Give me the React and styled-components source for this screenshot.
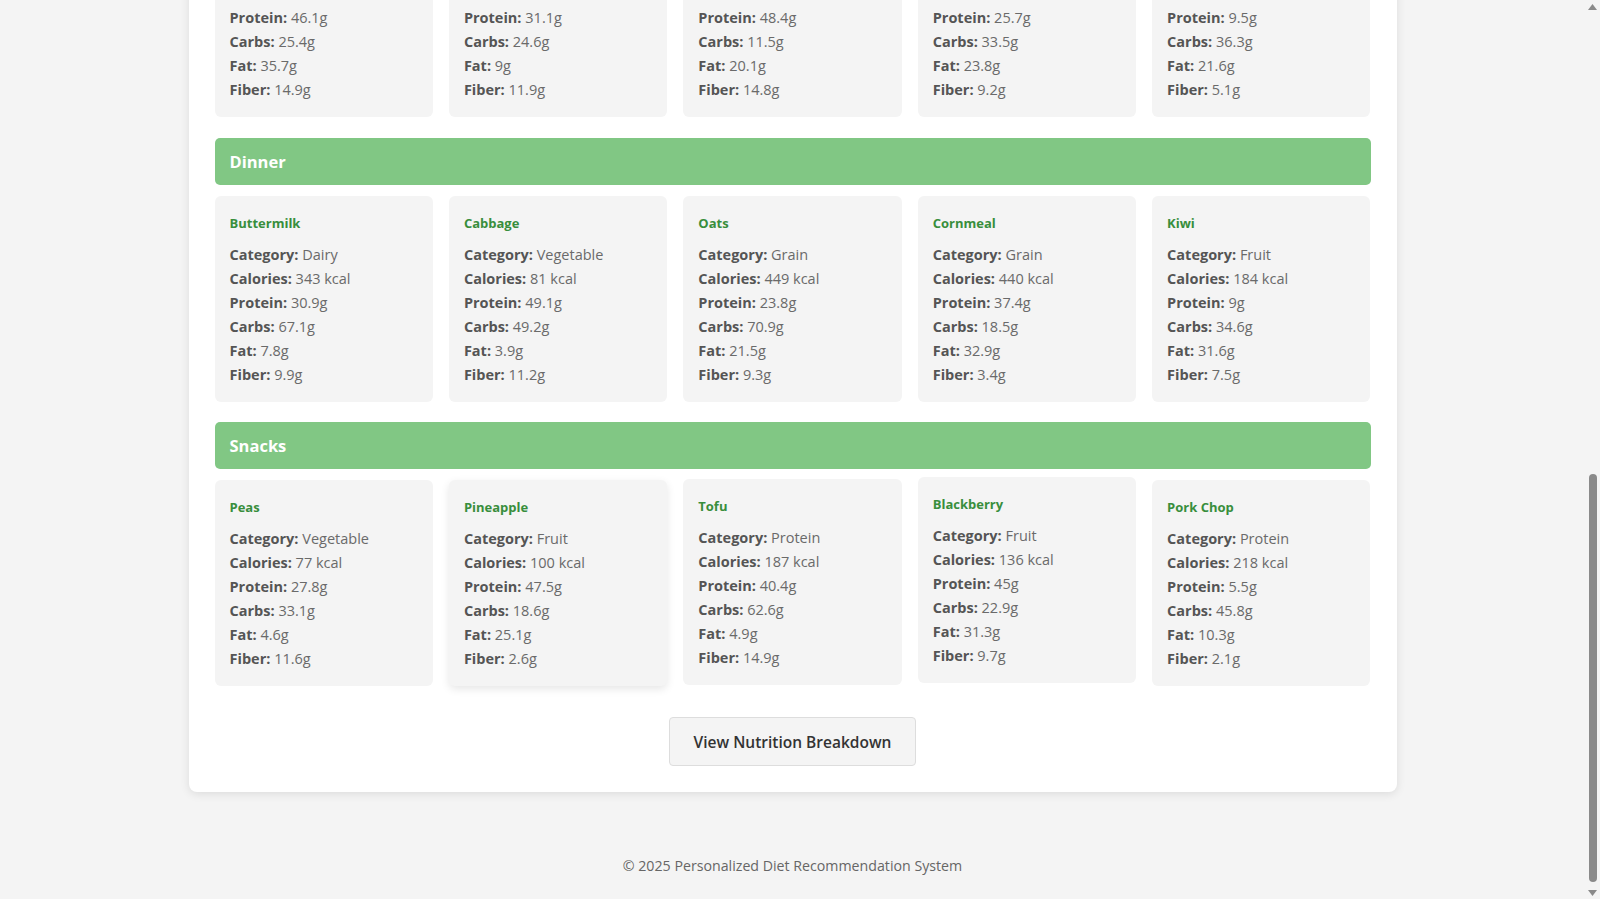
import React from "react";
import styled, { createGlobalStyle } from "styled-components";

const GlobalStyle = createGlobalStyle`
  body {
    margin: 0;
    background: #f4f4f4;
    font-family: "Open Sans", "Noto Sans", Arial, sans-serif;
    color: #333;
  }
  * { box-sizing: border-box; }
`;

const Page = styled.div`
  display: flex;
  flex-direction: column;
  align-items: center;
  padding-right: 15px;
`;

const Container = styled.main`
  width: 1208px;
  margin-top: -35px;
  background: #fff;
  border-radius: 8px;
  box-shadow: 0 2px 10px rgba(0, 0, 0, 0.1);
  padding: 26px;
  display: flex;
  flex-direction: column;
`;

const Section = styled.section`
  display: flex;
  flex-direction: column;
  margin-bottom: ${(p) => p.$gap}px;
`;

const SectionHeader = styled.h3`
  margin: 0 0 11px;
  background: #81c784;
  color: #fff;
  border-radius: 5px;
  padding: 12px 15px;
  font-size: 16.5px;
  line-height: 23px;
  font-weight: 700;
`;

const Grid = styled.div`
  display: grid;
  grid-template-columns: repeat(5, 1fr);
  gap: 16px;
  align-items: start;
`;

const Card = styled.div`
  background: #f4f4f4;
  border-radius: 6px;
  padding: ${(p) => (p.$compact ? "15px" : "16px 15px 15px")};
  transform: translateY(${(p) => p.$lift || 0}px);
  box-shadow: ${(p) => (p.$shadow ? "0 3px 8px rgba(0, 0, 0, 0.1)" : "none")};
`;

const FoodName = styled.h4`
  margin: 0 0 9px;
  color: #388e3c;
  font-size: 13px;
  line-height: 22px;
  font-weight: 700;
`;

const Line = styled.p`
  margin: 0;
  font-size: 14.5px;
  line-height: 24px;
  color: #6a6a6a;

  strong {
    color: #555;
    font-weight: 700;
  }
`;

const ButtonRow = styled.div`
  display: flex;
  justify-content: center;
`;

const Button = styled.button`
  font-family: inherit;
  background: #f4f4f4;
  border: 1px solid #ddd;
  border-radius: 4px;
  height: 49px;
  padding: 0 24px;
  font-size: 15.5px;
  font-weight: 600;
  color: #333;
  cursor: pointer;
`;

const Footer = styled.footer`
  margin-top: 40px;
  padding: 22px 0 20px;
  text-align: center;
  color: #666;
  font-size: 14.2px;
  line-height: 24px;
`;

const Scrollbar = styled.div`
  position: fixed;
  top: 0;
  right: 0;
  bottom: 0;
  width: 15px;
  background: #f4f4f4;
  display: flex;
  flex-direction: column;
  align-items: center;
  padding: 4px 0 3px;
`;

const Arrow = styled.svg`
  width: 9px;
  height: 6px;
  flex: none;
  fill: #8a8a8a;
`;

const Track = styled.div`
  flex: 1;
  width: 100%;
  display: flex;
  flex-direction: column;
  justify-content: flex-end;
  align-items: center;
  padding: 4px 0 8px;
`;

const Thumb = styled.div`
  width: 8px;
  height: 47%;
  border-radius: 4px;
  background: #8a8a8a;
`;

const lunch = [
  { protein: "46.1g", carbs: "25.4g", fat: "35.7g", fiber: "14.9g" },
  { protein: "31.1g", carbs: "24.6g", fat: "9g", fiber: "11.9g" },
  { protein: "48.4g", carbs: "11.5g", fat: "20.1g", fiber: "14.8g" },
  { protein: "25.7g", carbs: "33.5g", fat: "23.8g", fiber: "9.2g" },
  { protein: "9.5g", carbs: "36.3g", fat: "21.6g", fiber: "5.1g" },
];

const dinner = [
  { name: "Buttermilk", category: "Dairy", calories: 343, protein: "30.9g", carbs: "67.1g", fat: "7.8g", fiber: "9.9g" },
  { name: "Cabbage", category: "Vegetable", calories: 81, protein: "49.1g", carbs: "49.2g", fat: "3.9g", fiber: "11.2g" },
  { name: "Oats", category: "Grain", calories: 449, protein: "23.8g", carbs: "70.9g", fat: "21.5g", fiber: "9.3g" },
  { name: "Cornmeal", category: "Grain", calories: 440, protein: "37.4g", carbs: "18.5g", fat: "32.9g", fiber: "3.4g" },
  { name: "Kiwi", category: "Fruit", calories: 184, protein: "9g", carbs: "34.6g", fat: "31.6g", fiber: "7.5g" },
];

const snacks = [
  { name: "Peas", category: "Vegetable", calories: 77, protein: "27.8g", carbs: "33.1g", fat: "4.6g", fiber: "11.6g" },
  { name: "Pineapple", category: "Fruit", calories: 100, protein: "47.5g", carbs: "18.6g", fat: "25.1g", fiber: "2.6g", shadow: true },
  { name: "Tofu", category: "Protein", calories: 187, protein: "40.4g", carbs: "62.6g", fat: "4.9g", fiber: "14.9g", lift: -1 },
  { name: "Blackberry", category: "Fruit", calories: 136, protein: "45g", carbs: "22.9g", fat: "31.3g", fiber: "9.7g", lift: -3 },
  { name: "Pork Chop", category: "Protein", calories: 218, protein: "5.5g", carbs: "45.8g", fat: "10.3g", fiber: "2.1g" },
];

function Macros({ food }) {
  return (
    <>
      <Line><strong>Protein:</strong> {food.protein}</Line>
      <Line><strong>Carbs:</strong> {food.carbs}</Line>
      <Line><strong>Fat:</strong> {food.fat}</Line>
      <Line><strong>Fiber:</strong> {food.fiber}</Line>
    </>
  );
}

function FoodCard({ food }) {
  return (
    <Card $lift={food.lift} $shadow={food.shadow}>
      <FoodName>{food.name}</FoodName>
      <Line><strong>Category:</strong> {food.category}</Line>
      <Line><strong>Calories:</strong> {food.calories} kcal</Line>
      <Macros food={food} />
    </Card>
  );
}

export default function App() {
  return (
    <>
      <GlobalStyle />
      <Page>
        <Container>
          <Section $gap={21}>
            <Grid>
              {lunch.map((f, i) => (
                <Card key={i} $compact>
                  <Macros food={f} />
                </Card>
              ))}
            </Grid>
          </Section>
          <Section $gap={20}>
            <SectionHeader>Dinner</SectionHeader>
            <Grid>
              {dinner.map((f) => (
                <FoodCard key={f.name} food={f} />
              ))}
            </Grid>
          </Section>
          <Section $gap={31}>
            <SectionHeader>Snacks</SectionHeader>
            <Grid>
              {snacks.map((f) => (
                <FoodCard key={f.name} food={f} />
              ))}
            </Grid>
          </Section>
          <ButtonRow>
            <Button>View Nutrition Breakdown</Button>
          </ButtonRow>
        </Container>
        <Footer>© 2025 Personalized Diet Recommendation System</Footer>
      </Page>
      <Scrollbar aria-hidden="true">
        <Arrow viewBox="0 0 9 6"><polygon points="4.5,0 9,6 0,6" /></Arrow>
        <Track><Thumb /></Track>
        <Arrow viewBox="0 0 9 6"><polygon points="0,0 9,0 4.5,6" /></Arrow>
      </Scrollbar>
    </>
  );
}
